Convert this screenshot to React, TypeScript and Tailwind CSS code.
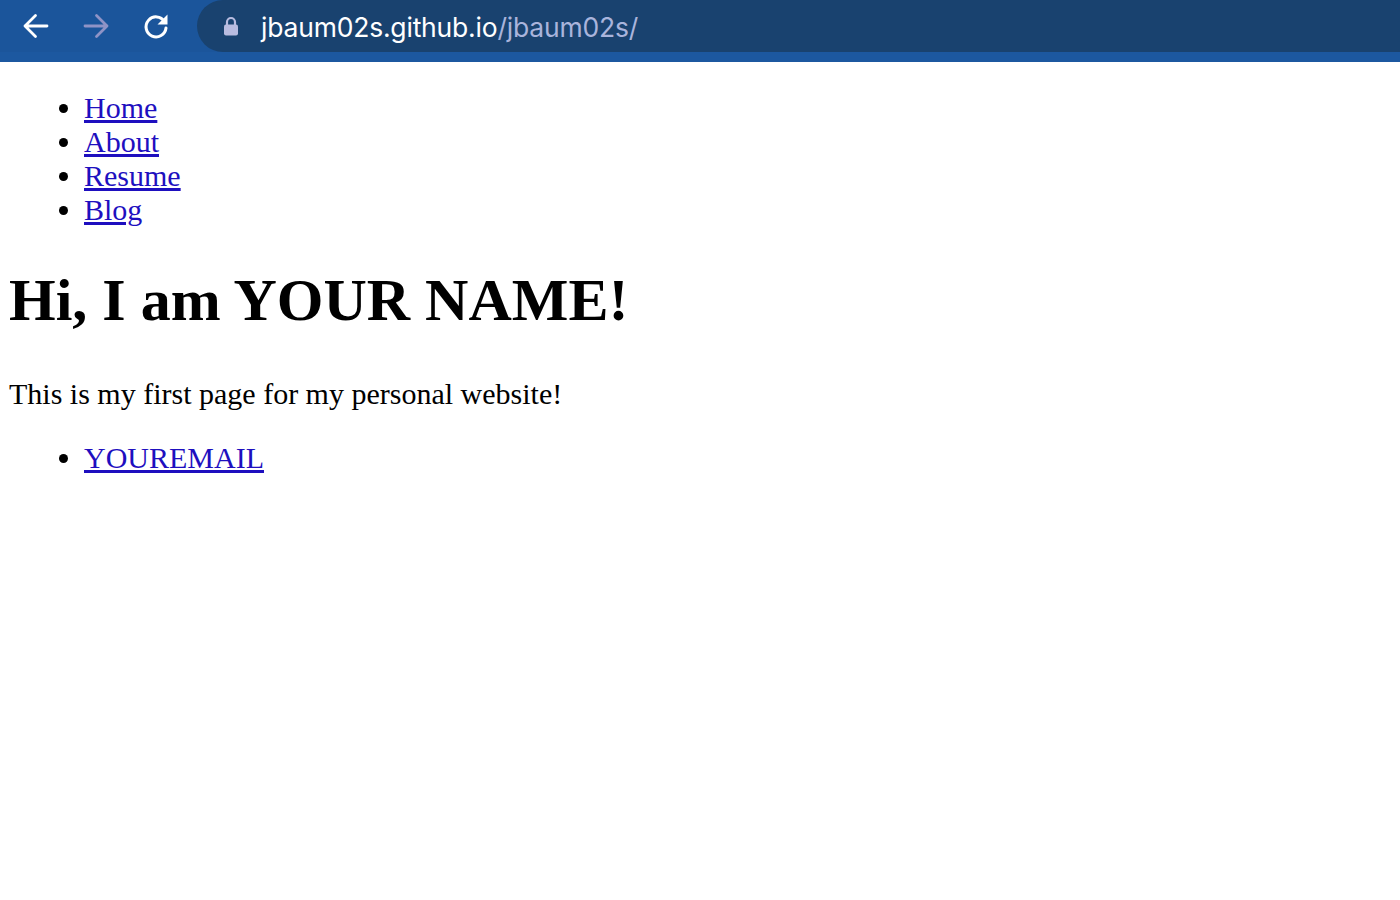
const navLinks = ["Home", "About", "Resume", "Blog"];

function BrowserBar() {
  return (
    <div className="flex h-[62px] flex-col bg-[#1b559b]">
      <div className="flex h-[52px] items-center">
        <div className="flex w-[197px] items-center">
          {/* back */}
          <svg className="ml-[22px] h-[28px] w-[28px]" viewBox="0 0 28 28" fill="none" stroke="#ffffff" strokeWidth={2.8} strokeLinecap="round" strokeLinejoin="round">
            <path d="M25 14H3M13.5 3.5L3 14l10.5 10.5" />
          </svg>
          {/* forward */}
          <svg className="ml-[32px] h-[28px] w-[28px]" viewBox="0 0 28 28" fill="none" stroke="#8f93c6" strokeWidth={2.8} strokeLinecap="round" strokeLinejoin="round">
            <path d="M3 14h22M14.5 3.5L25 14 14.5 24.5" />
          </svg>
          {/* reload */}
          <svg className="ml-[32px] h-[28px] w-[28px]" viewBox="0 0 28 28" fill="none">
            <path d="M22.5 9.5A10 10 0 1 0 24 16" stroke="#ffffff" strokeWidth={3} strokeLinecap="round" />
            <path d="M25.5 2.5v10h-10z" fill="#ffffff" />
          </svg>
        </div>
        <div className="flex h-[52px] flex-1 items-center rounded-l-full bg-[#19426f] pl-[26px]">
          <svg className="h-[20px] w-[16px]" viewBox="0 0 16 20">
            <path d="M4 9V6a4 4 0 0 1 8 0v3" fill="none" stroke="#b8bce0" strokeWidth={2.2} />
            <rect x="1" y="8.5" width="14" height="11" rx="2" fill="#b8bce0" />
          </svg>
          <span className="ml-[22px] mt-[2px] font-['Inter',sans-serif] text-[26.5px] tracking-[-0.2px] text-white leading-none">
            jbaum02s.github.io<span className="text-[#a9b4dc]">/jbaum02s/</span>
          </span>
        </div>
      </div>
      <div className="h-[10px] bg-[#1c58a0]" />
    </div>
  );
}

export default function App() {
  return (
    <div className="min-h-screen bg-white">
      <BrowserBar />
      <div className="px-[9px] font-['Liberation_Serif','Times_New_Roman',serif] text-[30px] leading-[34px] text-black">
        <ul className="mt-[29px] list-disc pl-[75px]">
          {navLinks.map((l) => (
            <li key={l}>
              <a href="#" className="text-[#1e0fbf] underline">
                {l}
              </a>
            </li>
          ))}
        </ul>
        <h1 className="mt-[39px] text-[60px] font-bold leading-[68px]">Hi, I am YOUR NAME!</h1>
        <p className="mt-[43px]">This is my first page for my personal website!</p>
        <ul className="mt-[30px] list-disc pl-[75px]">
          <li>
            <a href="#" className="text-[#1e0fbf] underline">
              YOUREMAIL
            </a>
          </li>
        </ul>
      </div>
    </div>
  );
}
